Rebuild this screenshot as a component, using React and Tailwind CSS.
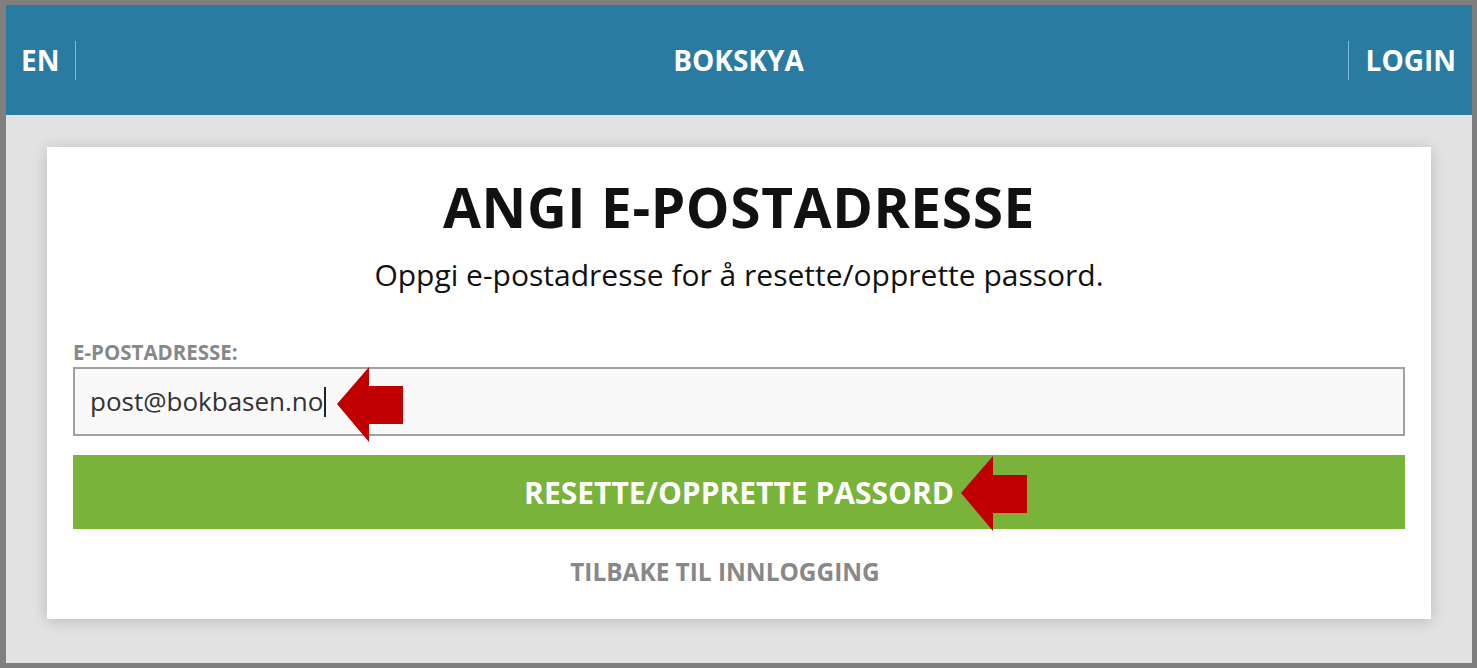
import React from 'react';

const font = { fontFamily: '"Open Sans", "Liberation Sans", sans-serif' };

// red callout arrow pointing left
const Arrow = ({ className }) => (
  <svg className={className} width="66" height="75" viewBox="0 0 66 75">
    <polygon points="0,37 32,0 32,19 66,19 66,57 32,57 32,75" fill="#c00000" />
  </svg>
);

const App = () => {
  return (
    <div
      className="h-screen w-full box-border border-[5px] border-l-[6px] border-[#7f7f7f] bg-[#e2e2e2] flex flex-col"
      style={font}
    >
      {/* Top bar */}
      <header className="h-[110px] shrink-0 bg-[#2a7ba1] flex items-center pl-[15px] pr-[16px] text-white font-bold text-[28px]">
        <div className="flex items-center flex-1">
          <span>EN</span>
          <span className="ml-4 w-px h-[39px] bg-[#7fbbdc]"></span>
        </div>
        <div className="flex-1 text-center">BOKSKYA</div>
        <div className="flex items-center justify-end flex-1">
          <span className="mr-[17px] w-px h-[39px] bg-[#7fbbdc]"></span>
          <span>LOGIN</span>
        </div>
      </header>

      {/* Content */}
      <main className="flex-1 pt-8 px-[41px]">
        <div className="relative bg-white h-[472px] px-[26px] pt-[28px] shadow-[0_2px_14px_rgba(0,0,0,0.18)]">
          <h1 className="text-center text-[55px] leading-[64px] font-bold text-[#111] tracking-[0.6px]">
            ANGI E-POSTADRESSE
          </h1>
          <p className="text-center text-[30px] leading-[40px] text-[#111] mt-[16px]">
            Oppgi e-postadresse for å resette/opprette passord.
          </p>

          <label className="block mt-[46px] text-[20.5px] leading-[22px] font-bold text-[#888]">
            E-POSTADRESSE:
          </label>
          <div className="mt-[4px] h-[69px] border-2 border-[#a0a0a0] bg-[#f9f9f9] flex items-center px-[15px]">
            <span className="text-[26px] text-[#333]">post@bokbasen.no</span>
            <span className="w-[2px] h-[30px] bg-[#222] ml-px"></span>
          </div>

          <button className="mt-[19px] w-full h-[74px] bg-[#7ab339] text-white font-bold text-[30px]">
            RESETTE/OPPRETTE PASSORD
          </button>

          <div className="mt-[25px] pr-[28px] text-center text-[24.4px] font-bold text-[#888]">
            TILBAKE TIL INNLOGGING
          </div>

          <Arrow className="absolute left-[290px] top-[220px]" />
          <Arrow className="absolute left-[914px] top-[309px]" />
        </div>
      </main>
    </div>
  );
};

export default App;
